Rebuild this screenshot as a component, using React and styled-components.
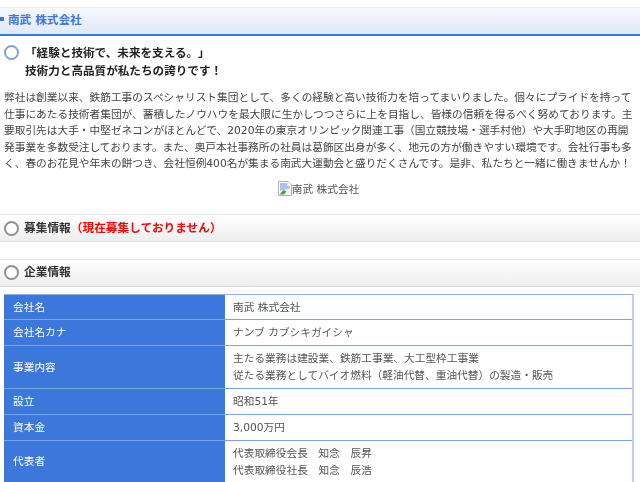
import React from "react";
import styled, { createGlobalStyle } from "styled-components";

const GlobalStyle = createGlobalStyle`
  html, body {
    margin: 0;
    padding: 0;
    background: #fff;
    font-family: "DejaVu Sans", "Noto Sans CJK JP", sans-serif;
    color: #444;
    overflow: hidden;
    text-spacing-trim: space-all;
  }
`;

const rows = [
  { label: "会社名", lines: ["南武 株式会社"], height: 25 },
  { label: "会社名カナ", lines: ["ナンブ カブシキガイシャ"], height: 26 },
  {
    label: "事業内容",
    lines: [
      "主たる業務は建設業、鉄筋工事業、大工型枠工事業",
      "従たる業務としてバイオ燃料（軽油代替、重油代替）の製造・販売",
    ],
    height: 43,
  },
  { label: "設立", lines: ["昭和51年"], height: 26 },
  { label: "資本金", lines: ["3,000万円"], height: 26 },
  {
    label: "代表者",
    lines: ["代表取締役会長　知念　辰昇", "代表取締役社長　知念　辰浩"],
    height: 42,
  },
];

export default function App() {
  return (
    <Page>
      <GlobalStyle />
      <TitleBar>
        <TitleMark />
        南武 株式会社
      </TitleBar>

      <Catch>
        <Ring $blue />
        <CatchText>
          <div>「経験と技術で、未来を支える。」</div>
          <div>技術力と高品質が私たちの誇りです！</div>
        </CatchText>
      </Catch>

      <Body>
        弊社は創業以来、鉄筋工事のスペシャリスト集団として、多くの経験と高い技術力を培ってまいりました。個々にプライドを持って仕事にあたる技術者集団が、蓄積したノウハウを最大限に生かしつつさらに上を目指し、皆様の信頼を得るべく努めております。主要取引先は大手・中堅ゼネコンがほとんどで、2020年の東京オリンピック関連工事（国立競技場・選手村他）や大手町地区の再開発事業を多数受注しております。また、奥戸本社事務所の社員は葛飾区出身が多く、地元の方が働きやすい環境です。会社行事も多く、春のお花見や年末の餅つき、会社恒例400名が集まる南武大運動会と盛りだくさんです。是非、私たちと一緒に働きませんか！
      </Body>

      <Figure>
        <BrokenImage viewBox="0 0 14 15">
          <path d="M0.5 0.5H10L13.5 4V14.5H0.5Z" fill="#fff" stroke="#b0b0b0" />
          <path d="M2 2H9.5V5H12V7.5L2 10Z" fill="#a9c3f0" />
          <path d="M1.5 13.5L5.5 9L8.5 10.5L6 13.5Z" fill="#4f9a32" />
        </BrokenImage>
        南武 株式会社
      </Figure>

      <SectionBar>
        <Ring />
        <SectionTitle>
          募集情報<Notice>（現在募集しておりません）</Notice>
        </SectionTitle>
      </SectionBar>

      <SectionBar $next>
        <Ring />
        <SectionTitle>企業情報</SectionTitle>
      </SectionBar>

      <InfoTable>
        {rows.map((row) => (
          <InfoRow key={row.label} $height={row.height}>
            <InfoLabel>{row.label}</InfoLabel>
            <InfoValue>
              {row.lines.map((line) => (
                <div key={line}>{line}</div>
              ))}
            </InfoValue>
          </InfoRow>
        ))}
      </InfoTable>
    </Page>
  );
}

const Page = styled.div`
  width: 640px;
  height: 482px;
  overflow: hidden;
  padding-top: 7px;
  box-sizing: border-box;
  filter: blur(0.3px);
`;

const TitleBar = styled.h1`
  margin: 0;
  height: 29px;
  box-sizing: border-box;
  display: flex;
  align-items: center;
  padding: 0 0 4px 8px;
  position: relative;
  font-size: 11.6px;
  font-weight: 700;
  color: #3c78d8;
  background: linear-gradient(#f7f9fe, #dfe8f6);
  border-top: 1px solid #e8edf7;
  border-bottom: 2px solid #3c78d8;
`;

const TitleMark = styled.span`
  position: absolute;
  left: 0;
  top: 9px;
  width: 4px;
  height: 4px;
  background: #3c78d8;
`;

const Ring = styled.span`
  flex: none;
  width: 15px;
  height: 15px;
  box-sizing: border-box;
  border-radius: 50%;
  background: #fff;
  border: 2px solid ${(p) => (p.$blue ? "#7fa3e0" : "#8f8f8f")};
`;

const Catch = styled.div`
  display: flex;
  align-items: flex-start;
  gap: 6px;
  padding: 9px 0 0 4px;
`;

const CatchText = styled.div`
  margin-top: -1px;
  font-size: 11.6px;
  font-weight: 700;
  color: #222;
  line-height: 18px;
`;

const Body = styled.p`
  margin: 10px 4px 0;
  font-size: 10.7px;
  line-height: 16.5px;
  color: #444;
`;

const Figure = styled.div`
  display: flex;
  justify-content: center;
  align-items: center;
  margin-top: 8px;
  padding-right: 3px;
  height: 16px;
  font-size: 10.7px;
  color: #555;
`;

const BrokenImage = styled.svg`
  width: 14px;
  height: 15px;
`;

const SectionBar = styled.h2`
  margin: ${(p) => (p.$next ? "16.5px" : "17.5px")} 0 0;
  height: 28px;
  box-sizing: border-box;
  display: flex;
  align-items: center;
  gap: 5px;
  padding-left: 4px;
  font-size: 11.7px;
  font-weight: 700;
  color: #333;
  background: linear-gradient(#fff, #eee);
  border-top: 1px solid #e6e6e6;
  border-bottom: 1px solid #ddd;
`;

const SectionTitle = styled.span`
  padding-bottom: 4px;
`;

const Notice = styled.span`
  color: #f00;
`;

const InfoTable = styled.div`
  margin: 7.5px 6px 0 4px;
  border-top: 1px solid #8eb0ec;
  border-right: 2px solid #bcd0f4;
`;

const InfoRow = styled.div`
  display: grid;
  grid-template-columns: 221px 1fr;
  height: ${(p) => p.$height}px;
  box-sizing: border-box;
  border-bottom: 1px solid #7ba3ea;
`;

const InfoLabel = styled.div`
  display: flex;
  align-items: center;
  padding: 0 0 2px 9px;
  font-size: 10.7px;
  color: #fff;
  background: #3c78dc;
`;

const InfoValue = styled.div`
  display: flex;
  flex-direction: column;
  justify-content: center;
  padding-left: 8px;
  font-size: 10.7px;
  line-height: 17px;
  color: #555;
`;
